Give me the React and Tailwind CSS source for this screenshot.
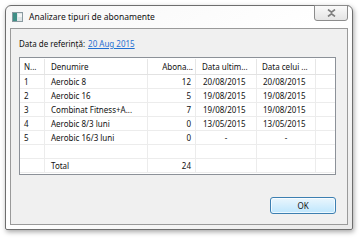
import React from "react";

const font = { fontFamily: '"Noto Sans", "Open Sans", sans-serif' };

const cols = "grid-cols-[25px_103px_48px_61px_59px_1fr]";

const rows = [
  ["1", "Aerobic 8", "12", "20/08/2015", "20/08/2015"],
  ["2", "Aerobic 16", "5", "19/08/2015", "19/08/2015"],
  ["3", "Combinat Fitness+A...", "7", "19/08/2015", "19/08/2015"],
  ["4", "Aerobic 8/3 luni", "0", "13/05/2015", "13/05/2015"],
  ["5", "Aerobic 16/3 luni", "0", "-", "-"],
  ["", "", "", "", ""],
  ["", "Total", "24", "", ""],
];

function Row({ r }) {
  const cell = "h-[14px] pt-[1px] border-r border-b border-[#ececec] flex items-center whitespace-nowrap overflow-hidden";
  return (
    <div className={`grid ${cols}`}>
      <div className={`${cell} pl-[4px]`}>{r[0]}</div>
      <div className={`${cell} pl-[6px]`}>{r[1]}</div>
      <div className={`${cell} justify-end pr-[4px]`}>{r[2]}</div>
      <div className={`${cell} ${r[3] === "-" ? "justify-center" : "pl-[7px]"}`}>{r[3]}</div>
      <div className={`${cell} ${r[4] === "-" ? "justify-center" : "pl-[6px]"}`}>{r[4]}</div>
      <div className="h-[14px] border-b border-[#ececec]"></div>
    </div>
  );
}

export default function App() {
  return (
    <div className="w-[360px] h-[240px] bg-white pt-[5px] pl-[5px] text-[8px] text-[#111]" style={font}>
      <div className="w-[348px] h-[225px] border border-[#6e6e6e] rounded-t-[6px] rounded-b-[2px] bg-gradient-to-br from-[#f7f7f7] via-[#ffffff] to-[#e9e9e9] shadow-[1px_2px_5px_rgba(0,0,0,0.35)] flex flex-col px-[4px] pb-[4px]">
        <div className="h-[22px] flex items-start justify-between">
          <div className="flex items-center h-[20px] pl-[2px] gap-[6px] mt-[1px]">
            <svg width="11" height="10" viewBox="0 0 11 10">
              <rect x="0.5" y="0.5" width="10" height="9" fill="#dfe6e8" stroke="#8a9aa0" />
              <rect x="1" y="1" width="4" height="8" fill="#3f8f86" />
              <rect x="6" y="2" width="4" height="3" fill="#f4f6f6" />
            </svg>
            <span className="text-[8.5px] text-[#111] whitespace-nowrap">Analizare tipuri de abonamente</span>
          </div>
          <div className="w-[34px] h-[16px] -mt-[1px] border border-[#8c8c8c] rounded-b-[3px] bg-gradient-to-b from-[#fafafa] to-[#e4e4e4] flex items-center justify-center">
            <svg width="9" height="8" viewBox="0 0 9 8">
              <path d="M1 0.5 L4.5 3.2 L8 0.5 M1 7.5 L4.5 4.8 L8 7.5" stroke="#7d7d7d" strokeWidth="1.6" fill="none" />
            </svg>
          </div>
        </div>
        <div className="flex-1 border border-[#9a9a9a] bg-[#f0f0f0] flex flex-col pl-[8px] pr-[11px] pt-[8px]">
          <div className="h-[14px] flex items-center gap-[3px] whitespace-nowrap">
            <span>Data de referință:</span>
            <span className="text-[#1f6fd1] underline">20 Aug 2015</span>
          </div>
          <div className="mt-[6px] border border-[#8c9198] bg-white h-[118px] overflow-hidden">
            <div className={`grid ${cols} h-[17px] pt-[1px] border-b border-[#e2e2e2] whitespace-nowrap`}>
              <div className="border-r border-[#e6e6e6] flex items-center pl-[4px]">N...</div>
              <div className="border-r border-[#e6e6e6] flex items-center pl-[6px]">Denumire</div>
              <div className="border-r border-[#e6e6e6] flex items-center justify-end pr-[2px]">Abona...</div>
              <div className="border-r border-[#e6e6e6] flex items-center pl-[6px]">Data ultim...</div>
              <div className="border-r border-[#e6e6e6] flex items-center pl-[5px]">Data celui ...</div>
              <div></div>
            </div>
            {rows.map((r, i) => (
              <Row key={i} r={r} />
            ))}
          </div>
          <div className="flex justify-end mt-[22px]">
            <div className="w-[66px] h-[17px] border border-[#3c7fb1] rounded-[3px] bg-gradient-to-b from-[#eaf6fd] to-[#bee6fd] shadow-[inset_0_0_0_1px_rgba(255,255,255,0.7)] flex items-center justify-center">
              OK
            </div>
          </div>
        </div>
      </div>
    </div>
  );
}
